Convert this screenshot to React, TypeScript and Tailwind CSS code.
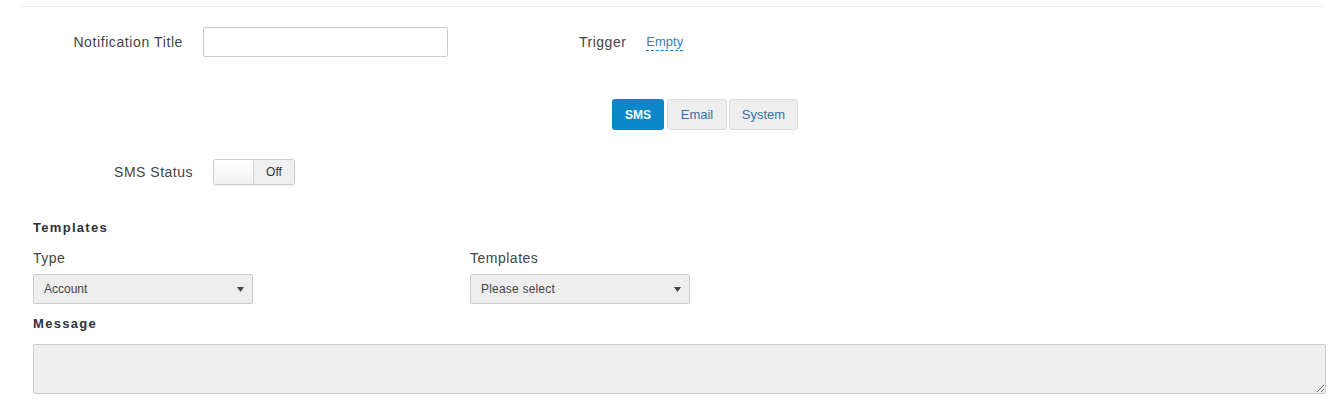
const font = { fontFamily: '"Liberation Sans", Arial, sans-serif' }

function Caret() {
  return (
    <svg className="w-[7px] h-[5px]" viewBox="0 0 7 5">
      <path d="M0 0h7L3.5 5z" fill="#444" />
    </svg>
  )
}

function FakeSelect({ value, className }: { value: string; className?: string }) {
  return (
    <div className={`h-[30px] flex items-center justify-between pl-[10px] pr-[8px] bg-[#eeeeee] border border-[#cccccc] rounded-[2px] text-[12px] text-[#444] ${className ?? ''}`}>
      <span>{value}</span>
      <Caret />
    </div>
  )
}

export default function App() {
  return (
    <div className="bg-white w-[1340px] h-[410px] pl-[22px] pr-[17px] pt-[6px] overflow-hidden" style={font}>
      <div className="border-t border-[#eeeeee]">

        {/* Title + trigger */}
        <div className="mt-[20px] flex items-center h-[30px]">
          <label className="w-[161px] text-right text-[14px] tracking-[0.6px] text-[#444]">Notification Title</label>
          <input className="ml-[20px] w-[245px] h-[30px] border border-[#cccccc] rounded-[2px] bg-white" />
          <span className="ml-[131px] text-[14px] tracking-[0.5px] text-[#444]">Trigger</span>
          <span className="ml-[20px] text-[13px] text-[#3b7bbd] border-b border-dashed border-[#1a7cc0] leading-[16px]">Empty</span>
        </div>

        {/* Channel tabs */}
        <div className="mt-[42px] ml-[590px] flex items-center h-[31px]">
          <button className="w-[52px] h-[31px] rounded-[3px] bg-[#0a87c9] text-white text-[12px] font-bold">SMS</button>
          <button className="ml-[3px] w-[60px] h-[31px] rounded-[3px] bg-[#eeeeee] border border-[#dddddd] text-[#3470a6] text-[13px]">Email</button>
          <button className="ml-[2px] w-[69px] h-[31px] rounded-[3px] bg-[#eeeeee] border border-[#dddddd] text-[#3470a6] text-[13px]">System</button>
        </div>

        {/* SMS status */}
        <div className="mt-[29px] flex items-center h-[26px]">
          <label className="w-[171px] text-right text-[14px] tracking-[0.5px] text-[#444]">SMS Status</label>
          <div className="ml-[20px] w-[82px] h-[26px] flex border border-[#cccccc] rounded-[3px] overflow-hidden shadow-[0_1px_1px_rgba(0,0,0,0.08)]">
            <div className="w-[40px] bg-gradient-to-b from-white to-[#f2f2f2] border-r border-[#d5d5d5]" />
            <div className="flex-1 flex items-center justify-center bg-[#f0f0f0] text-[12px] text-[#333]">Off</div>
          </div>
        </div>

        {/* Templates */}
        <div className="pl-[11px]">
          <div className="mt-[33px] h-[20px] leading-[20px] text-[13px] font-bold tracking-[1.3px] text-[#2e333a]">Templates</div>
          <div className="mt-[10px] flex">
            <div className="w-[220px]">
              <div className="h-[20px] leading-[20px] text-[14px] tracking-[0.5px] text-[#444]">Type</div>
              <FakeSelect value="Account" className="mt-[6px]" />
            </div>
            <div className="ml-[217px] w-[220px]">
              <div className="h-[20px] leading-[20px] text-[14px] tracking-[0.5px] text-[#444]">Templates</div>
              <FakeSelect value="Please select" className="mt-[6px] tracking-[0.2px]" />
            </div>
          </div>
          <div className="mt-[10px] h-[20px] leading-[20px] text-[13px] font-bold tracking-[1.3px] text-[#2e333a]">Message</div>
          <textarea disabled className="mt-[10px] block w-[1293px] h-[50px] bg-[#eeeeee] border border-[#cccccc] rounded-[2px]" />
        </div>
      </div>
    </div>
  )
}
